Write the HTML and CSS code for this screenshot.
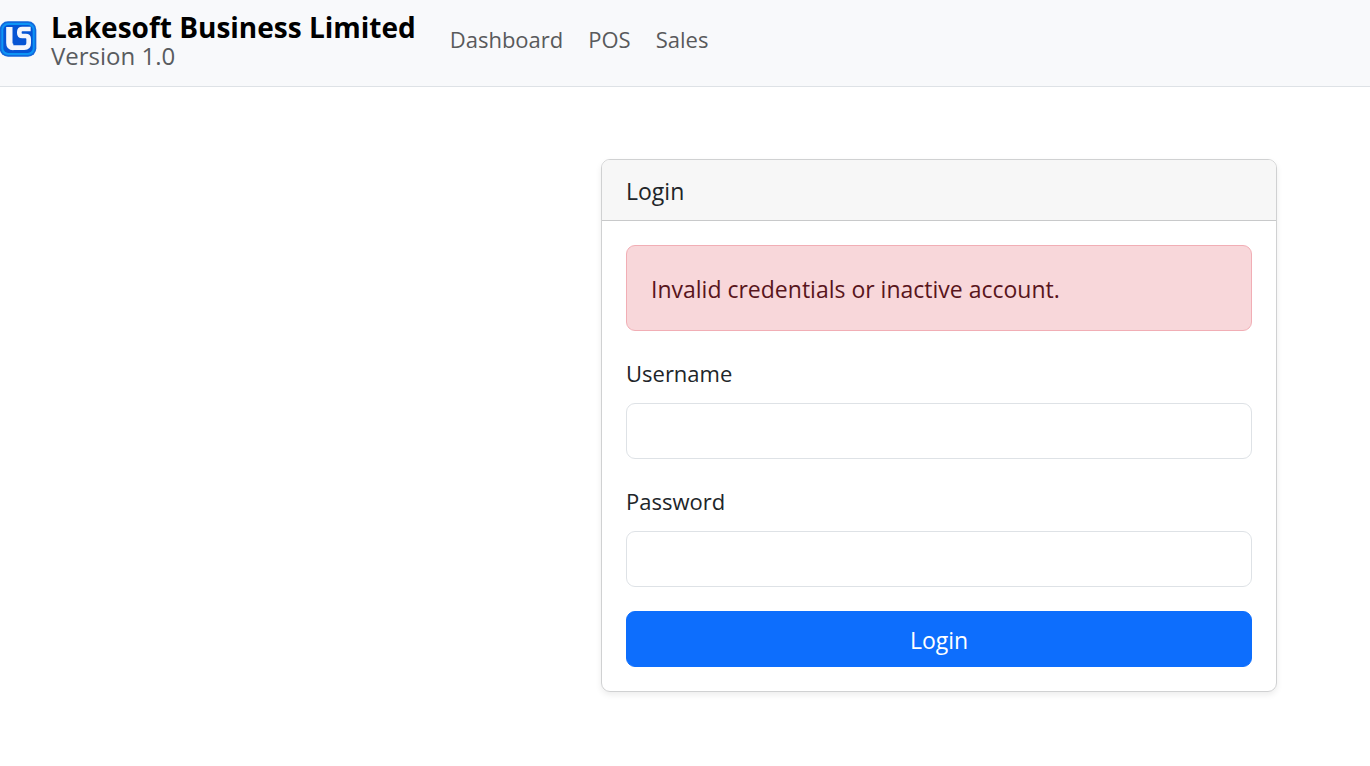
FILE: index.html
```html
<!DOCTYPE html>
<html lang="en">
<head>
<meta charset="utf-8">
<meta name="viewport" content="width=device-width, initial-scale=1">
<title>Login - Lakesoft Business Limited</title>
<link rel="stylesheet" href="styles.css">
</head>
<body>
<header class="navbar">
  <a class="brand" href="#">
    <svg class="logo" viewBox="0 0 111 108" aria-hidden="true">
      <rect x="-1" y="1" width="110" height="106" rx="25" fill="#1268dc"/>
      <rect x="4" y="6" width="100" height="96" rx="20" fill="#0c94f5"/>
      <rect x="10" y="12" width="88" height="84" rx="15" fill="#0554d4"/>
      <g fill="none" stroke="#f4f6fc">
        <path d="M92 24H67Q58 24 58 33V36Q58 45 67 45H77Q86 45 86 54V67Q86 80 73 80H38" stroke-width="14"/>
        <path d="M28 18V66Q28 78 40 78" stroke-width="19"/>
      </g>
    </svg>
    <span class="brand-text">
      <strong class="brand-name">Lakesoft Business Limited</strong>
      <span class="brand-version">Version 1.0</span>
    </span>
  </a>
  <nav class="nav">
    <a class="nav-link" href="#">Dashboard</a>
    <a class="nav-link" href="#">POS</a>
    <a class="nav-link" href="#">Sales</a>
  </nav>
</header>
<main class="page">
  <section class="card">
    <div class="card-header">Login</div>
    <div class="card-body">
      <div class="alert" role="alert">Invalid credentials or inactive account.</div>
      <form class="form">
        <div class="field">
          <label class="label" for="username">Username</label>
          <input class="input" id="username" type="text">
        </div>
        <div class="field">
          <label class="label" for="password">Password</label>
          <input class="input" id="password" type="password">
        </div>
        <button class="button" type="submit">Login</button>
      </form>
    </div>
  </section>
</main>
</body>
</html>
```
FILE: styles.css
```css
* { box-sizing: border-box; }
body {
  margin: 0;
  background: #fff;
  color: #212529;
  font-family: "Segoe UI", "Open Sans", "Noto Sans", sans-serif;
  font-size: 23px;
  line-height: 36px;
}
.navbar {
  display: flex;
  align-items: center;
  gap: 34px;
  padding: 10px 0 18px;
  background: #f8f9fb;
  border-bottom: 1px solid #dee2e6;
}
.brand {
  display: flex;
  align-items: center;
  gap: 14px;
  color: #000;
  text-decoration: none;
}
.logo { width: 37px; height: 36px; }
.brand-text { display: flex; flex-direction: column; }
.brand-name { font-size: 28px; line-height: 34px; }
.brand-version { font-size: 24px; line-height: 24px; color: #595c5f; }
.nav { display: flex; gap: 25px; }
.nav-link { font-size: 22px; color: #595a5b; text-decoration: none; }
.page {
  display: grid;
  grid-template-columns: 601fr 676fr 93fr;
  padding: 72px 0;
}
.card {
  grid-column: 2;
  border: 1px solid #d0d1d2;
  border-radius: 9px;
  box-shadow: 0 3px 6px rgba(0, 0, 0, .075);
  overflow: hidden;
}
.card-header {
  padding: 13px 24px 11px;
  background: #f7f7f7;
  border-bottom: 1px solid #c8c9ca;
}
.card-body { padding: 24px; }
.alert {
  padding: 25px 24px 23px;
  margin-bottom: 24px;
  background: #f8d7da;
  border: 1px solid #f1aeb5;
  border-radius: 9px;
  color: #58151c;
}
.form { display: flex; flex-direction: column; gap: 24px; }
.field { display: flex; flex-direction: column; gap: 12px; }
.label { font-size: 22px; }
.input, .button {
  width: 100%;
  height: 56px;
  padding: 10px 18px 8px;
  border: 1px solid #dee2e6;
  border-radius: 9px;
  background: #fff;
  color: inherit;
  font: inherit;
}
.button {
  border-color: #0d6efd;
  background: #0d6efd;
  color: #fff;
}
```
